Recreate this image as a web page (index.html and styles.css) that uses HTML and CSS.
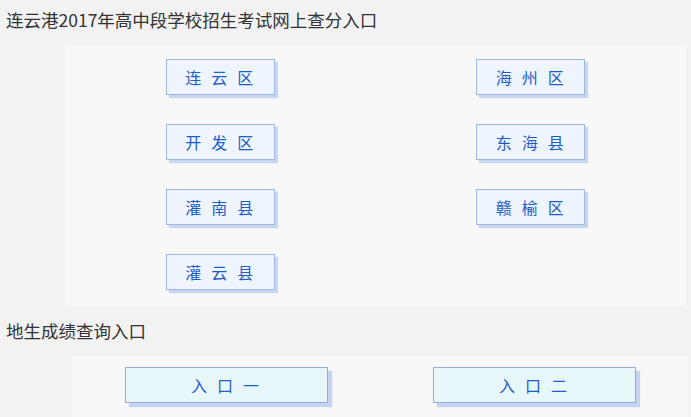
FILE: index.html
```html
<!DOCTYPE html>
<html lang="zh-CN">
<head>
    <meta charset="UTF-8">
    <meta name="viewport" content="width=device-width, initial-scale=1.0">
    <title>连云港2017年高中段学校招生考试网上查分入口</title>
    <link rel="stylesheet" href="styles.css">
</head>
<body>
    <div class="title">连云港2017年高中段学校招生考试网上查分入口</div>

    <div class="panel districts">
        <div class="cell"><a class="btn" href="#">连云区</a></div>
        <div class="cell"><a class="btn" href="#">海州区</a></div>
        <div class="cell"><a class="btn" href="#">开发区</a></div>
        <div class="cell"><a class="btn" href="#">东海县</a></div>
        <div class="cell"><a class="btn" href="#">灌南县</a></div>
        <div class="cell"><a class="btn" href="#">赣榆区</a></div>
        <div class="cell"><a class="btn" href="#">灌云县</a></div>
    </div>

    <div class="title sub">地生成绩查询入口</div>

    <div class="panel entries">
        <div class="cell"><a class="btn wide" href="#">入口一</a></div>
        <div class="cell"><a class="btn wide" href="#">入口二</a></div>
    </div>
</body>
</html>
```

FILE: styles.css
```css
body {
    margin: 0;
    background-color: #f2f2f2;
    font-family: "Noto Sans CJK SC", "Liberation Sans", sans-serif;
    color: #333;
    overflow: hidden;
}
.title {
    height: 45px;
    line-height: 40px;
    padding-left: 6px;
    font-size: 17.5px;
}
.title.sub {
    height: 50px;
    line-height: 50px;
}
.panel {
    background-color: #f8f8f8;
    display: grid;
    grid-template-columns: 1fr 1fr;
}
.districts {
    margin-left: 65px;
    width: 621px;
    padding: 14px 0 16px;
    row-gap: 29px;
}
.entries {
    margin-left: 72px;
    width: 616px;
    padding: 11px 0 20px;
}
.cell {
    display: flex;
    justify-content: center;
}
.btn {
    display: block;
    box-sizing: border-box;
    width: 109px;
    height: 36px;
    line-height: 34px;
    text-align: center;
    background-color: #eef5fe;
    border: 1px solid #9fb7de;
    box-shadow: 3px 3px 1px #c8d7f0;
    color: #1f5cc4;
    font-size: 16px;
    letter-spacing: 10px;
    padding-left: 8px;
    text-decoration: none;
}
.btn.wide {
    width: 203px;
    background-color: #e7f6f9;
    border-color: #98acd8;
    box-shadow: 4px 4px 1px #c4d3f0;
}
```
